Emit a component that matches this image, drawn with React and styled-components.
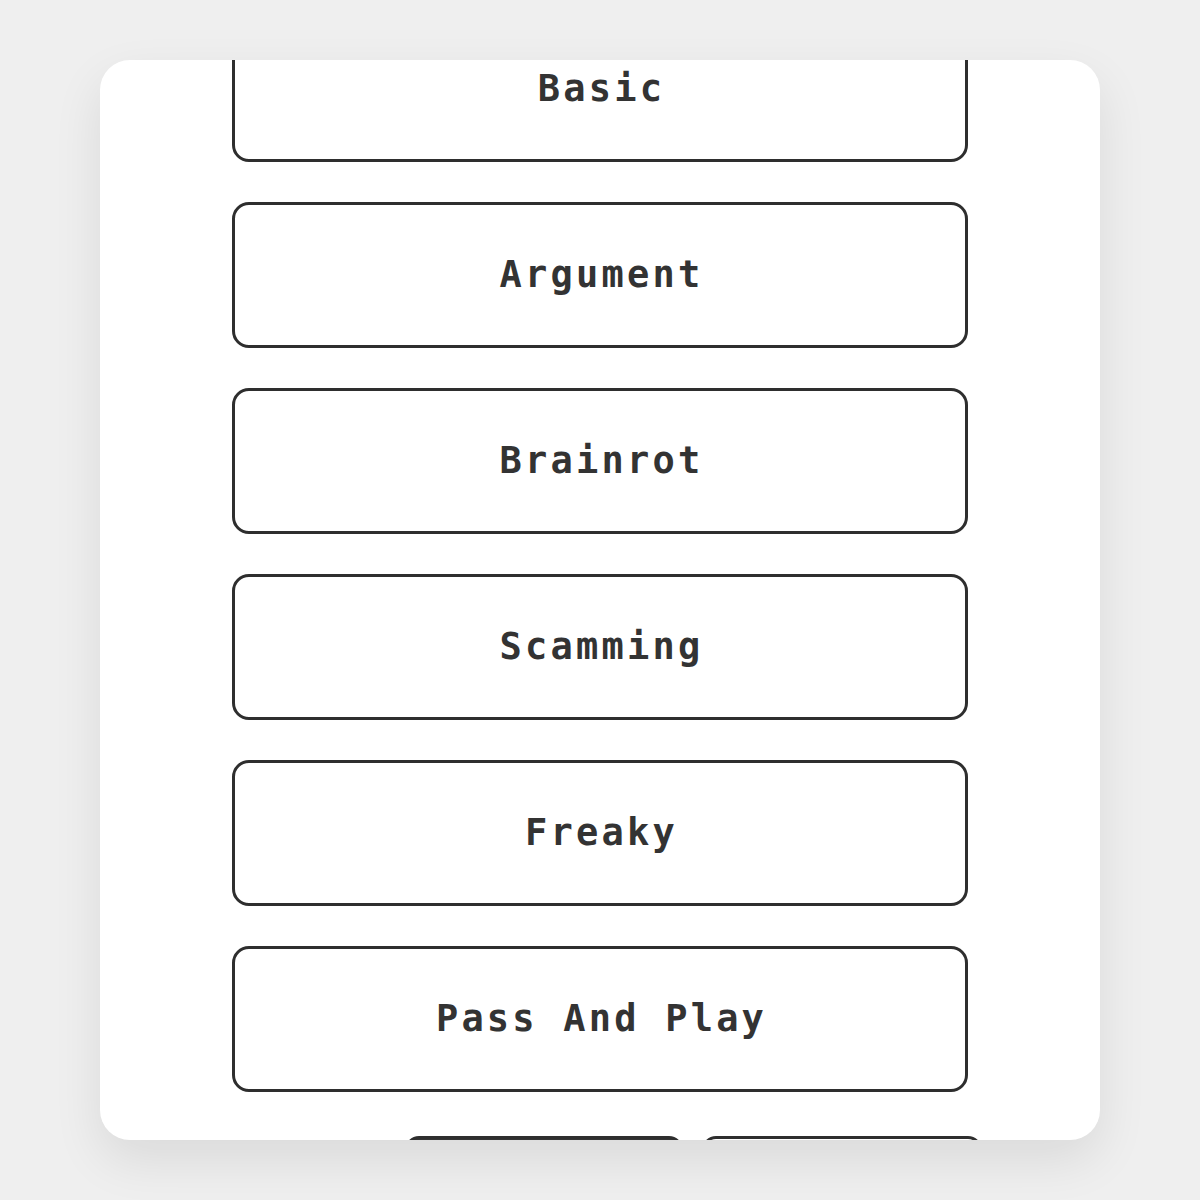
import React, { useLayoutEffect, useRef } from "react";
import styled, { createGlobalStyle } from "styled-components";

const Global = createGlobalStyle`
  html, body { margin: 0; padding: 0; background: #efefef; }
  body { font-family: "DejaVu Sans Mono", "Liberation Mono", monospace; }
`;

const Page = styled.div`
  width: 1200px;
  height: 1200px;
  padding: 60px 100px;
  box-sizing: border-box;
`;

const Card = styled.div`
  width: 1000px;
  height: 1080px;
  background: #ffffff;
  border-radius: 30px;
  box-shadow: 0 20px 50px rgba(0, 0, 0, 0.09);
  overflow: hidden;
`;

const Scroller = styled.div`
  height: 100%;
  overflow-y: auto;
  scrollbar-width: none;
  &::-webkit-scrollbar { display: none; }
`;

const List = styled.div`
  display: flex;
  flex-direction: column;
  align-items: center;
  gap: 40px;
  padding: 40px 0 60px;
`;

const ModeButton = styled.button`
  width: 736px;
  height: 146px;
  box-sizing: border-box;
  border: 3px solid #2e2e2e;
  border-radius: 17px;
  background: #ffffff;
  color: #333333;
  font-family: "DejaVu Sans Mono", "Liberation Mono", monospace;
  font-weight: bold;
  font-size: 37px;
  letter-spacing: 3.2px;
  padding: 0 0 1px 3px;
  cursor: pointer;
`;

const BottomRow = styled.div`
  display: grid;
  grid-template-columns: 278px 280px;
  gap: 19px;
  align-self: flex-start;
  margin-left: 305px;
  margin-top: 4px;
`;

const SmallButton = styled.button`
  height: 90px;
  box-sizing: border-box;
  border: 3px solid #2e2e2e;
  border-radius: 14px;
  background: ${(p) => (p.$filled ? "#333333" : "#ffffff")};
  color: ${(p) => (p.$filled ? "#ffffff" : "#333333")};
  font-family: "DejaVu Sans Mono", "Liberation Mono", monospace;
  font-weight: bold;
  font-size: 28px;
`;

const modes = ["Basic", "Argument", "Brainrot", "Scamming", "Freaky", "Pass And Play"];

export default function App() {
  const ref = useRef(null);
  useLayoutEffect(() => {
    if (ref.current) ref.current.scrollTop = 84;
  }, []);
  return (
    <>
      <Global />
      <Page>
        <Card>
          <Scroller ref={ref}>
            <List>
              {modes.map((m) => (
                <ModeButton key={m}>{m}</ModeButton>
              ))}
              <BottomRow>
                <SmallButton $filled>Back</SmallButton>
                <SmallButton>Custom</SmallButton>
              </BottomRow>
            </List>
          </Scroller>
        </Card>
      </Page>
    </>
  );
}
